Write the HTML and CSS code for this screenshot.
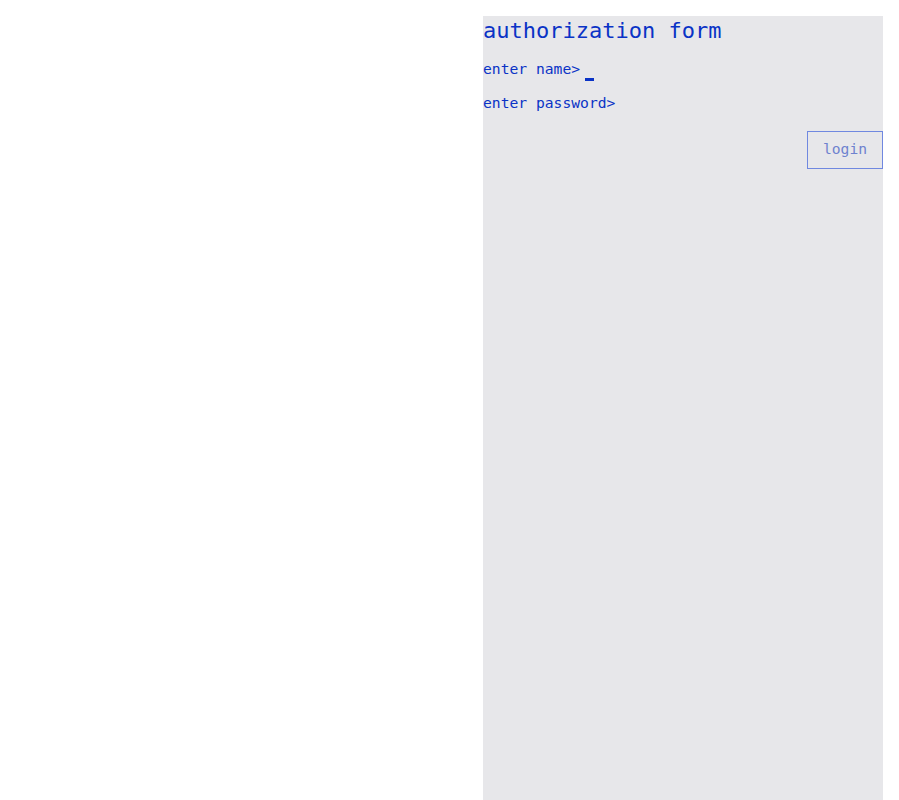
FILE: index.html
```html
<!DOCTYPE html>
<html lang="en">
<head>
<meta charset="utf-8">
<title>authorization form</title>
<link rel="stylesheet" href="styles.css">
</head>
<body>
<div class="page">
  <section class="panel">
    <h1 class="title">authorization form</h1>
    <div class="row">enter name&gt;<span class="cursor"></span></div>
    <div class="row">enter password&gt;</div>
    <div class="actions"><button class="login" type="button">login</button></div>
  </section>
</div>
</body>
</html>
```
FILE: styles.css
```css
html, body {
  margin: 0;
  padding: 0;
  background: #ffffff;
}
.page {
  display: flex;
  justify-content: flex-end;
  padding: 16px 16px 0 0;
  min-height: 100vh;
  box-sizing: border-box;
  font-family: "DejaVu Sans Mono", monospace;
  font-size: 14.67px;
  color: #0a33c6;
}
.panel {
  width: 400px;
  background: #e7e7ea;
  display: flex;
  flex-direction: column;
}
.title {
  margin: 0 0 14px;
  font-size: 22px;
  font-weight: normal;
  line-height: 30px;
}
.row {
  line-height: 17px;
  height: 17px;
  margin-bottom: 17px;
  white-space: pre;
}
.cursor {
  display: inline-block;
  width: 9px;
  height: 3px;
  margin-left: 5px;
  background: #0a33c6;
  vertical-align: -7px;
}
.actions {
  display: flex;
  justify-content: flex-end;
  margin-top: 3px;
}
.login {
  width: 76px;
  height: 38px;
  padding: 0 0 3px;
  border: 1px solid #7088e0;
  background: transparent;
  color: #6e82cf;
  font-family: "DejaVu Sans Mono", monospace;
  font-size: 14.67px;
}
```
